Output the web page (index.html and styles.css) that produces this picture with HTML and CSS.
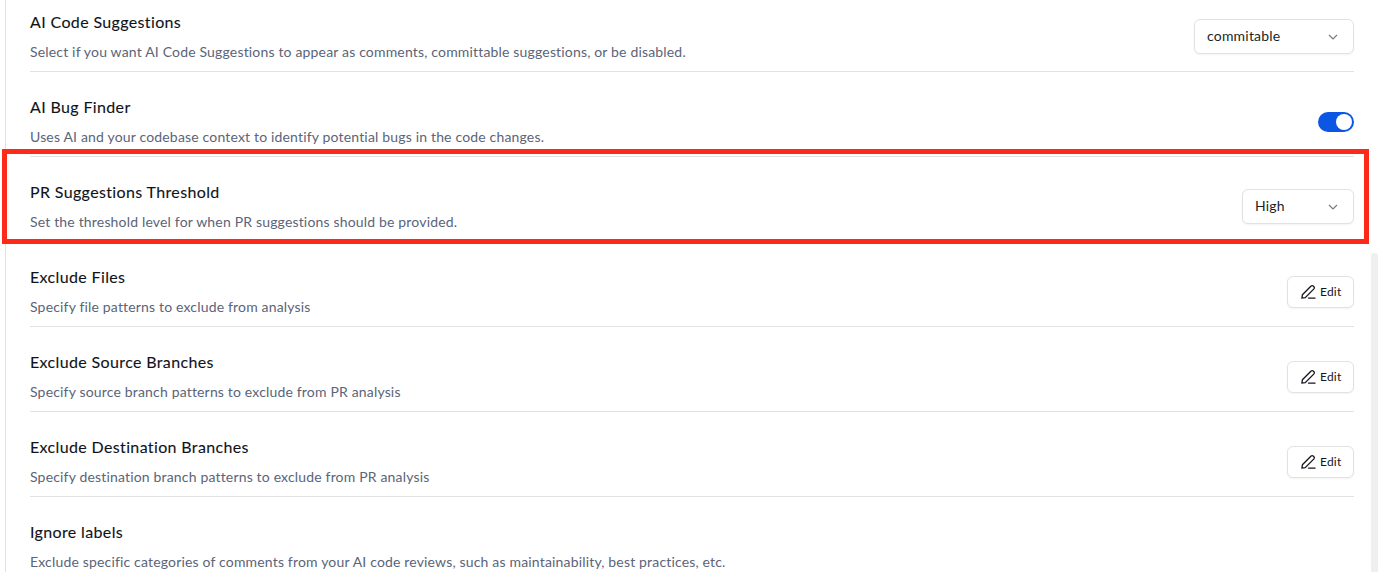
FILE: index.html
```html
<!DOCTYPE html>
<html lang="en">

<head>
    <meta charset="UTF-8">
    <title>Review Settings</title>
    <link rel="stylesheet" href="styles.css">
</head>

<body>
    <div class="settings">
        <div class="row">
            <div class="info">
                <div class="title">AI Code Suggestions</div>
                <div class="desc">Select if you want AI Code Suggestions to appear as comments, committable suggestions, or be disabled.</div>
            </div>
            <div class="select select-wide">
                <span>commitable</span>
                <svg class="chevron" viewBox="0 0 10 6"><path d="M1 1l4 4 4-4"/></svg>
            </div>
        </div>

        <div class="row">
            <div class="info">
                <div class="title">AI Bug Finder</div>
                <div class="desc">Uses AI and your codebase context to identify potential bugs in the code changes.</div>
            </div>
            <div class="toggle"><span class="knob"></span></div>
        </div>

        <div class="row">
            <div class="info">
                <div class="title">PR Suggestions Threshold</div>
                <div class="desc">Set the threshold level for when PR suggestions should be provided.</div>
            </div>
            <div class="select">
                <span>High</span>
                <svg class="chevron" viewBox="0 0 10 6"><path d="M1 1l4 4 4-4"/></svg>
            </div>
        </div>

        <div class="row">
            <div class="info">
                <div class="title">Exclude Files</div>
                <div class="desc">Specify file patterns to exclude from analysis</div>
            </div>
            <button class="edit">
                <svg class="pencil" viewBox="0 0 16 16"><path d="M1.5 11.5L10.8 2.2a1.6 1.6 0 0 1 2.2 0l.8.8a1.6 1.6 0 0 1 0 2.2L4.5 14.5 1 15z"/><path d="M8 15h7"/></svg>
                Edit
            </button>
        </div>

        <div class="row">
            <div class="info">
                <div class="title">Exclude Source Branches</div>
                <div class="desc">Specify source branch patterns to exclude from PR analysis</div>
            </div>
            <button class="edit">
                <svg class="pencil" viewBox="0 0 16 16"><path d="M1.5 11.5L10.8 2.2a1.6 1.6 0 0 1 2.2 0l.8.8a1.6 1.6 0 0 1 0 2.2L4.5 14.5 1 15z"/><path d="M8 15h7"/></svg>
                Edit
            </button>
        </div>

        <div class="row">
            <div class="info">
                <div class="title">Exclude Destination Branches</div>
                <div class="desc">Specify destination branch patterns to exclude from PR analysis</div>
            </div>
            <button class="edit">
                <svg class="pencil" viewBox="0 0 16 16"><path d="M1.5 11.5L10.8 2.2a1.6 1.6 0 0 1 2.2 0l.8.8a1.6 1.6 0 0 1 0 2.2L4.5 14.5 1 15z"/><path d="M8 15h7"/></svg>
                Edit
            </button>
        </div>

        <div class="row">
            <div class="info">
                <div class="title">Ignore labels</div>
                <div class="desc">Exclude specific categories of comments from your AI code reviews, such as maintainability, best practices, etc.</div>
            </div>
        </div>
    </div>

    <div class="highlight"></div>
    <div class="scrollbar"></div>
</body>

</html>
```

FILE: styles.css
```css
html,
body {
    height: 100%;
}

body {
    margin: 0;
    background-color: #fff;
    font-family: "Lato", "Open Sans", sans-serif;
    overflow: hidden;
}

.settings {
    margin: -13px 0 0 5px;
    padding: 0 24px 0 24px;
    border-left: 1px solid #e2e2e2;
}

/* Custom styling */
.row {
    display: flex;
    justify-content: space-between;
    align-items: center;
    padding: 25px 0 9px;
    border-bottom: 1px solid #e2e2e2;
}

.title {
    color: #10131a;
    font-size: 16px;
    line-height: 20px;
    font-weight: 400;
    letter-spacing: 0.36px;
    -webkit-text-stroke: 0.1px #10131a;
}

.desc {
    margin-top: 10px;
    color: #5b6478;
    font-size: 14px;
    line-height: 20px;
    letter-spacing: 0.17px;
}

.select {
    display: flex;
    justify-content: space-between;
    align-items: center;
    box-sizing: border-box;
    width: 112px;
    height: 35px;
    margin-top: -1px;
    padding: 0 15px 0 12px;
    background-color: #fff;
    border: 1px solid #e2e2e2;
    border-radius: 6px;
    box-shadow: 0 1px 2px rgba(0, 0, 0, 0.05);
    color: #1c1f26;
    font-size: 14px;
    letter-spacing: 0.2px;
}

.select span {
    margin-bottom: 2px;
}

.select-wide {
    width: 160px;
}

.chevron {
    width: 10px;
    height: 6px;
    fill: none;
    stroke: #7a7a7a;
    stroke-width: 1.2;
}

.toggle {
    display: flex;
    justify-content: flex-end;
    align-items: center;
    box-sizing: border-box;
    width: 36px;
    height: 20px;
    padding: 2px;
    background-color: #0b57e3;
    border-radius: 10px;
}

.knob {
    width: 16px;
    height: 16px;
    background-color: #fff;
    border-radius: 50%;
}

.edit {
    display: flex;
    align-items: center;
    gap: 4px;
    box-sizing: border-box;
    width: 67px;
    height: 32px;
    padding: 0 0 1px 13px;
    background-color: #fff;
    border: 1px solid #e2e2e2;
    border-radius: 6px;
    box-shadow: 0 1px 2px rgba(0, 0, 0, 0.05);
    color: #14171d;
    font-family: inherit;
    font-size: 12px;
    letter-spacing: 0.2px;
}

.pencil {
    width: 15px;
    height: 15px;
    fill: none;
    stroke: #14171d;
    stroke-width: 1.4;
    stroke-linecap: round;
}

/* Annotation drawn over the page */
.highlight {
    position: absolute;
    left: 2px;
    top: 149px;
    width: 1357px;
    height: 85px;
    border: 5px solid #fb2a1a;
}

.scrollbar {
    position: absolute;
    left: 1371px;
    top: 253px;
    width: 7px;
    bottom: 0;
    background-color: #efefef;
    border-radius: 4px 4px 0 0;
}
```
